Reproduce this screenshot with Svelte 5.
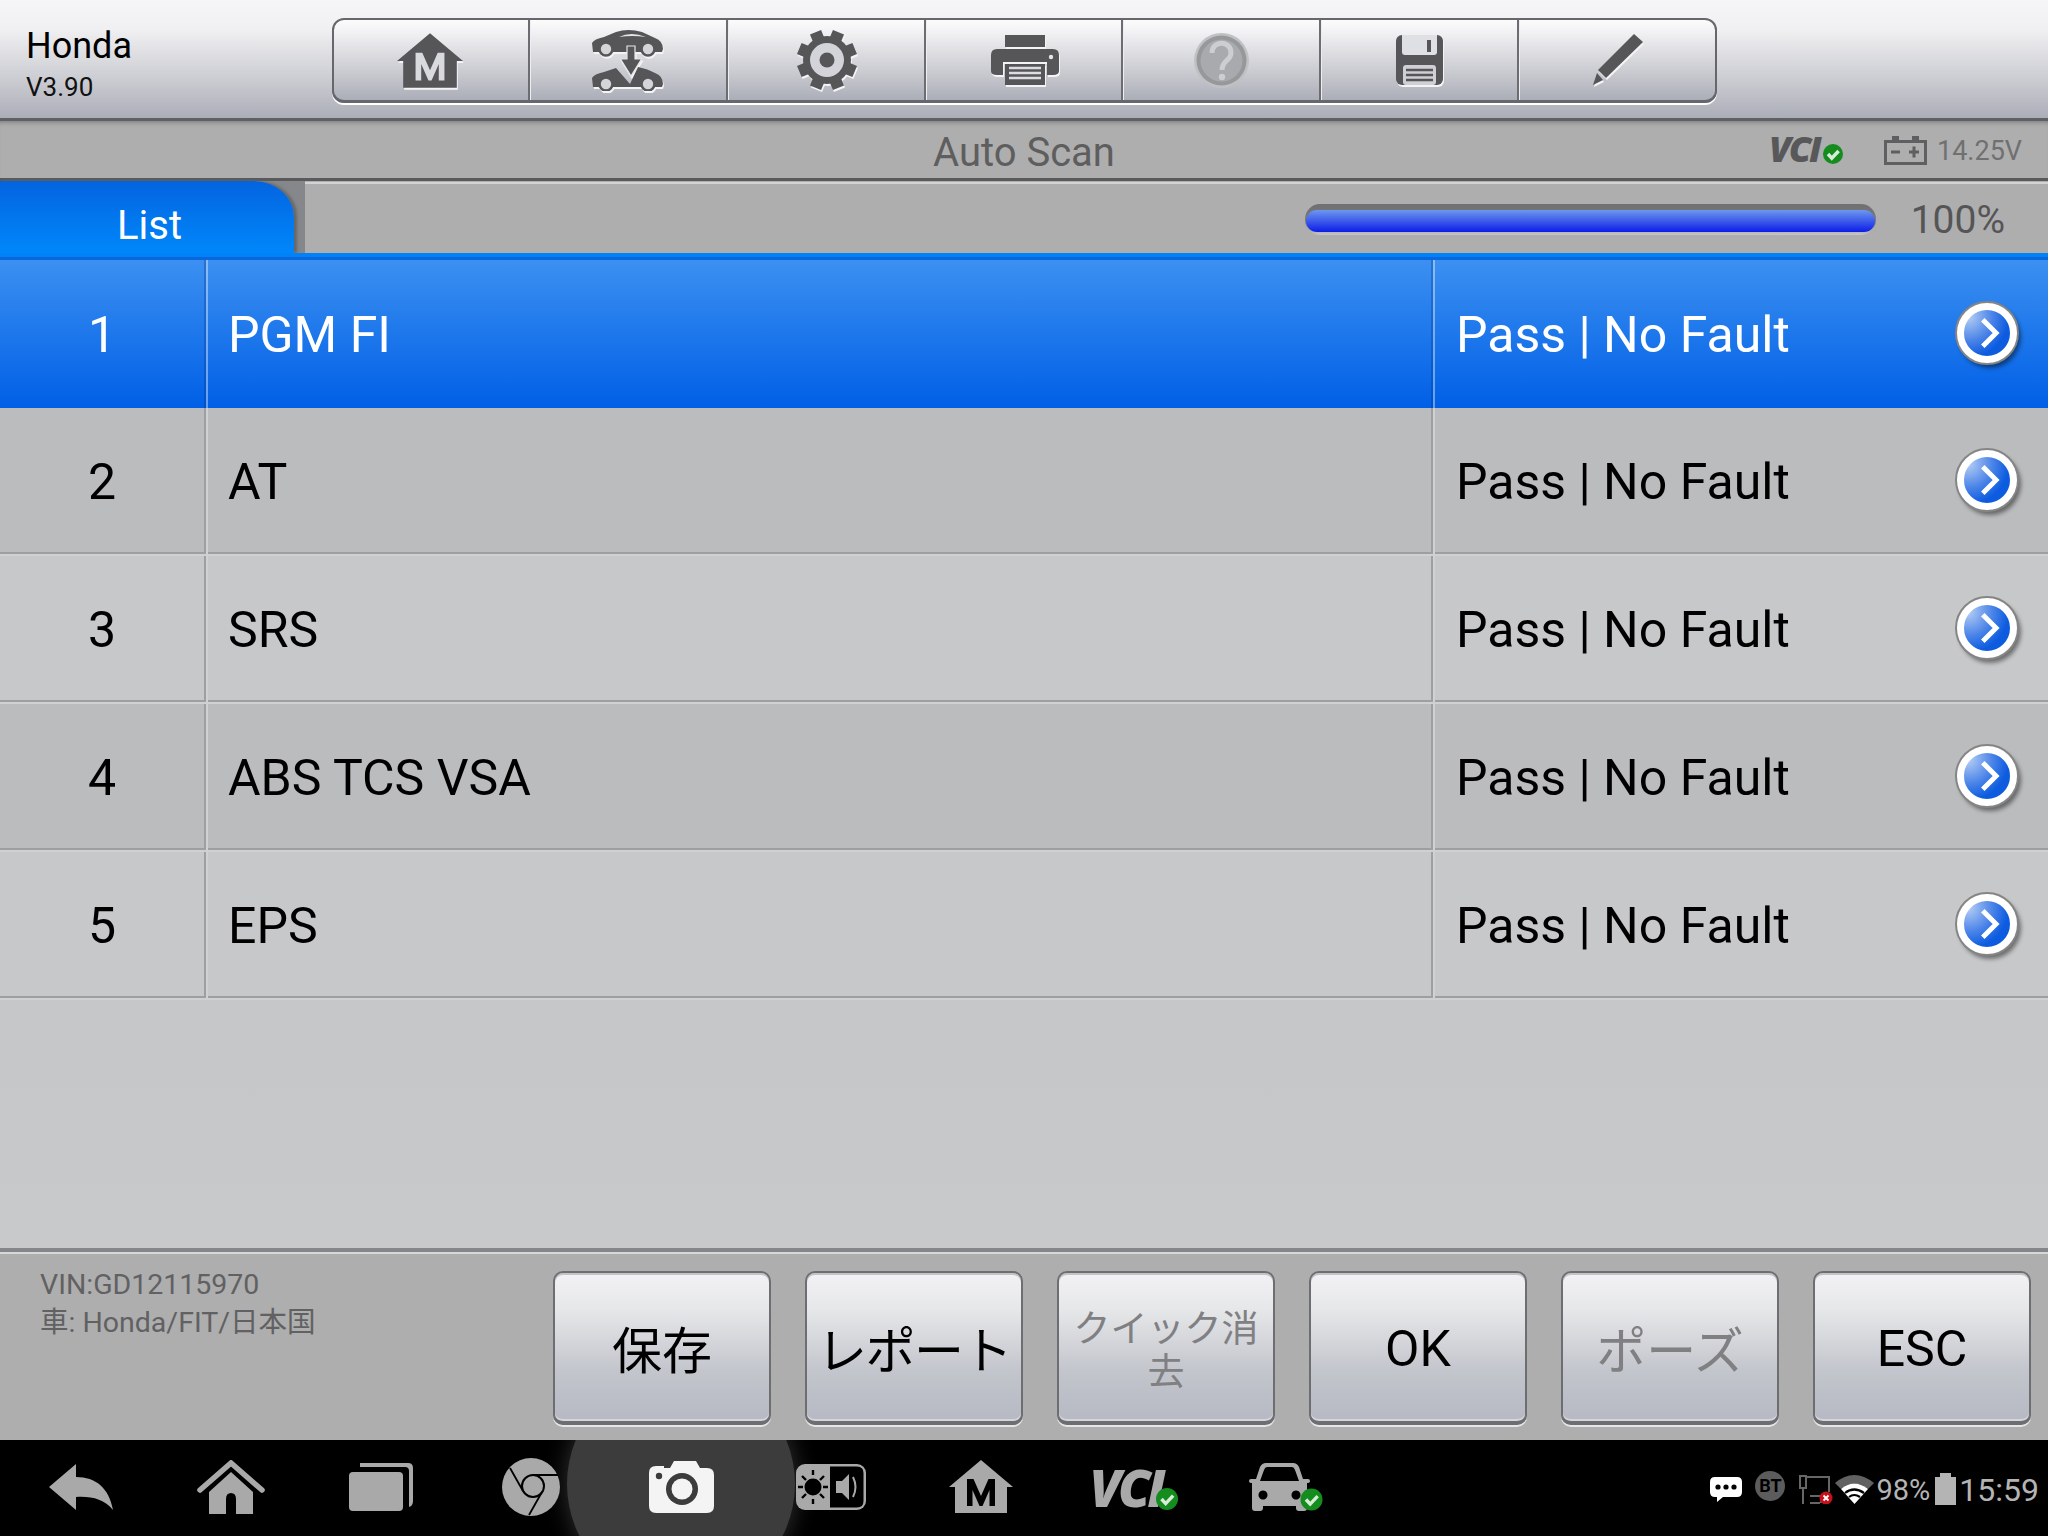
<script lang="ts">
	// Honda auto scan result page: top toolbar, result list, footer buttons, android nav bar
	const rows = [
		{ n: 1, name: 'PGM FI' },
		{ n: 2, name: 'AT' },
		{ n: 3, name: 'SRS' },
		{ n: 4, name: 'ABS TCS VSA' },
		{ n: 5, name: 'EPS' }
	];
	const buttons = [
		{ label: '保存' },
		{ label: 'レポート', tight: true },
		{ label: 'クイック消去', off: true, small: true },
		{ label: 'OK', latin: true },
		{ label: 'ポーズ', off: true },
		{ label: 'ESC', latin: true }
	];
	const tools = ['home', 'swap', 'gear', 'print', 'help', 'save', 'pen'];
	const navs = ['back', 'home', 'recent', 'chrome', 'camera', 'mix', 'm', 'vci', 'car'];
</script>

{#snippet check(cx: number, cy: number, rx: number, ry: number)}
	<ellipse {cx} {cy} {rx} {ry} fill="#148c1e" />
	<path d={`M${cx - rx * 0.5} ${cy} l${rx * 0.38} ${ry * 0.42} l${rx * 0.68} ${-ry * 0.72}`} fill="none" stroke="#d8ecd8" stroke-width="3.4" />
{/snippet}

{#snippet mhouse(fill: string, letter: string)}
	<path d="M32 0 L64 27 H58 V53 H6 V27 H0 Z" {fill} />
	<path d="M18 46 V19 H24.500 L32 36 L39.500 19 H46 V46 H40.500 V30 L33.500 46 H30.500 L23.500 30 V46 Z" fill={letter} />
{/snippet}

{#snippet minicar(y: number, notch: boolean)}
	<g transform={`translate(0 ${y})`}>
		{#if notch}
			<path d="M0 14 Q2 10 12 8 Q18 6 24 4 L38 20 L46 3 Q56 5 63 9 Q71 12 71 20 L70 23 H1 Z" fill="#565658" />
		{:else}
			<path d="M0 14 Q2 10 12 8 L24 3 Q36 -1 50 3 L63 9 Q71 12 71 20 L70 23 H1 Z" fill="#565658" />
			<path d="M27 8 Q39 2 54 8 Q40 6 27 8 Z" fill="#e4e5e8" />
		{/if}
		<circle cx="14" cy="20" r="6.500" fill="#d4d5d9" stroke="#565658" stroke-width="2.600" />
		<circle cx="56" cy="20" r="6.500" fill="#d4d5d9" stroke="#565658" stroke-width="2.600" />
	</g>
{/snippet}

<div class="page">
	<header class="top">
		<div class="brand">
			<div class="make">Honda</div>
			<div class="ver">V3.90</div>
		</div>
		<div class="toolbar">
			{#each tools as t}
				<div class="tool">
					{#if t === 'home'}
						<svg class="ico house" width="66" height="55" viewBox="0 0 64 53">{@render mhouse('#565658', '#d9dadd')}</svg>
					{:else if t === 'swap'}
						<svg class="ico" width="71" height="62" viewBox="0 0 71 62">
							{@render minicar(0, false)}
							{@render minicar(35, true)}
							<path d="M35 17 H43 V30 H49.500 L39 47 L28.500 30 H35 Z" fill="#565658" stroke="#e4e5e8" stroke-width="1.200" />
						</svg>
					{:else if t === 'gear'}
						<svg class="ico nudge" width="60" height="60" viewBox="0 0 60 60">
							<g fill="#565658">
								{#each [0, 45, 90, 135, 180, 225, 270, 315] as a}
									<rect x="24" y="0" width="12" height="14" transform={`rotate(${a + 22.5} 30 30)`} />
								{/each}
								<circle cx="30" cy="30" r="24" />
							</g>
							<circle cx="30" cy="30" r="17" fill="#d3d4d9" />
							<circle cx="30" cy="30" r="7.500" fill="#565658" />
						</svg>
					{:else if t === 'print'}
						<svg class="ico nudge" width="68" height="50" viewBox="0 0 68 50">
							<path d="M14 0 H54 V12 H14 Z" fill="#565658" />
							<path d="M6 14 H62 Q68 14 68 20 V36 Q68 40 62 40 H56 V27 H12 V40 H6 Q0 40 0 36 V20 Q0 14 6 14 Z" fill="#565658" />
							<circle cx="60" cy="22" r="2.200" fill="#e4e5e8" />
							<path d="M14 29 H54 V50 H14 Z" fill="#565658" />
							<path d="M18 33 H50 M18 38 H50 M18 43 H50" stroke="#dcdde0" stroke-width="2.400" />
						</svg>
					{:else if t === 'help'}
						<svg class="ico off" width="55" height="55" viewBox="0 0 55 55">
							<circle cx="27.500" cy="27.500" r="27.500" fill="#c0c1c4" />
							<circle cx="27.500" cy="27.500" r="25" fill="#979899" />
							<circle cx="27.500" cy="27.500" r="21" fill="#a9aaad" />
							<path d="M18 20 C18 7 37 7 37 20 C37 28 28 27 28 37" fill="none" stroke="#cdced1" stroke-width="5" />
							<circle cx="28" cy="44" r="3.200" fill="#cdced1" />
						</svg>
					{:else if t === 'save'}
						<svg class="ico" width="47" height="50" viewBox="0 0 47 50">
							<rect width="47" height="50" rx="6" fill="#565658" />
							<path d="M6 0 H41 V17 Q41 20 38 20 H9 Q6 20 6 17 Z" fill="#dfe0e3" />
							<rect x="31" y="5" width="4" height="12" fill="#565658" />
							<rect x="7" y="30" width="33" height="20" rx="3" fill="#cfd0d5" />
							<path d="M10 35 H37 M10 40 H37 M10 45 H37" stroke="#565658" stroke-width="2.400" />
						</svg>
					{:else if t === 'pen'}
						<svg class="ico nudge" width="50" height="52" viewBox="0 0 50 52">
							<path d="M41 0 L50 8 L13 44 L5 36 Z" fill="#565658" />
							<path d="M4 39 L10 46 L0 51 Z" fill="#565658" />
						</svg>
					{/if}
				</div>
			{/each}
		</div>
	</header>

	<div class="titlebar">
		<div class="title">Auto Scan</div>
		<div class="vci">
			<span class="vci-text">VCI</span>
			<svg class="vci-ok" width="20" height="20" viewBox="0 0 20 20">{@render check(10, 10, 10, 10)}</svg>
		</div>
		<svg class="batt" width="43" height="29" viewBox="0 0 43 29">
			<path d="M8 0 H15 V4 H28 V0 H35 V4 H43 V29 H0 V4 H8 Z" fill="#5f5f61" />
			<rect x="3" y="7" width="37" height="19" fill="#aeaeae" />
			<path d="M7 16 H16 M25 16 H35 M30 10.500 V21.500" stroke="#5f5f61" stroke-width="3" />
		</svg>
		<div class="volts">14.25V</div>
	</div>

	<div class="tabbar">
		<div class="tab-wrap"><div class="tab">List</div></div>
		<div class="progress-area">
			<div class="progress"><div class="fill"></div></div>
			<div class="pct">100%</div>
		</div>
	</div>
	<div class="strip"></div>

	<main class="list">
		{#each rows as r, i}
			<div class="row" class:sel={i === 0} class:alt={i % 2 === 1}>
				<div class="c-n">{r.n}</div>
				<div class="c-name">{r.name}</div>
				<div class="c-res">
					<span>Pass | No Fault</span>
					<span class="go">
						<svg width="36" height="36" viewBox="0 0 36 36"><path d="M11 3 L26 18 L11 33" fill="none" stroke="#fff" stroke-width="5.500" /></svg>
					</span>
				</div>
			</div>
		{/each}
	</main>

	<footer class="foot">
		<div class="info">
			<div>VIN:GD12115970</div>
			<div>車: Honda/FIT/日本国</div>
		</div>
		<div class="btns">
			{#each buttons as b}
				<div class="btn" class:off={b.off} class:small={b.small} class:latin={b.latin} class:tight={b.tight}><span>{b.label}</span></div>
			{/each}
		</div>
	</footer>

	<nav class="nav">
		<div class="cam-glow"></div>
		<div class="nav-icons">
			{#each navs as n}
				<div class="nav-cell">
					{#if n === 'back'}
						<svg width="64" height="46" viewBox="0 0 64 46">
							<path d="M0 23 L27 0 V13 C47 13 60 24 64 46 C55 35 42 32 27 33 V46 Z" fill="#a9a9a9" />
						</svg>
					{:else if n === 'home'}
						<svg width="68" height="54" viewBox="0 0 68 54">
							<path d="M3 30 L34 3 L65 30" fill="none" stroke="#a9a9a9" stroke-width="5.500" stroke-linecap="round" />
							<path d="M12 32 L34 12 L56 32 V54 H39 V39 Q39 33 34 33 Q29 33 29 39 V54 H12 Z" fill="#a9a9a9" />
						</svg>
					{:else if n === 'recent'}
						<svg width="64" height="48" viewBox="0 0 64 48">
							<path d="M11 0 H59 Q64 0 64 5 V38 Q64 43 60 44 V8 Q60 4 56 4 H11 Z" fill="#a9a9a9" />
							<rect y="9" width="54" height="39" rx="4" fill="#a9a9a9" />
						</svg>
					{:else if n === 'chrome'}
						<svg width="58" height="58" viewBox="0 0 58 58">
							<circle cx="29" cy="29" r="29" fill="#a9a9a9" />
							<circle cx="31" cy="28" r="11" fill="none" stroke="#000" stroke-width="2" />
							<path d="M31 17 H56 M21 33 L8 10 M40 34 L27 57" stroke="#000" stroke-width="1.800" fill="none" />
						</svg>
					{:else if n === 'camera'}
						<svg width="65" height="52" viewBox="0 0 65 52">
							<path d="M7 5 H15 V7 H21 L25 0 H47 L51 7 H58 Q65 7 65 14 V45 Q65 52 58 52 H7 Q0 52 0 45 V12 Q0 5 7 5 Z" fill="#f4f4f4" />
							<circle cx="33" cy="28" r="16" fill="#3c3c3c" />
							<circle cx="33" cy="28" r="10.500" fill="#f4f4f4" />
							<circle cx="10" cy="15" r="3.200" fill="#3c3c3c" />
						</svg>
					{:else if n === 'mix'}
						<svg width="70" height="46" viewBox="0 0 70 46">
							<rect width="70" height="46" rx="9" fill="#a9a9a9" />
							<path d="M34 2.500 H61 Q67.500 2.500 67.500 9 V37 Q67.500 43.500 61 43.500 H34 Z" fill="#000" />
							<circle cx="17" cy="23" r="8.500" fill="#000" />
							<path d="M17 6 V11 M17 35 V40 M2 23 H7 M27 23 H32 M6 12 L10 16 M28 12 L24 16 M6 34 L10 30 M28 34 L24 30" stroke="#000" stroke-width="2.400" />
							<path d="M40 17 H46 L53 10 V36 L46 29 H40 Z" fill="#a9a9a9" />
							<path d="M57 13 Q62 23 57 33" fill="none" stroke="#a9a9a9" stroke-width="2" />
						</svg>
					{:else if n === 'm'}
						<svg width="64" height="53" viewBox="0 0 64 53">{@render mhouse('#a9a9a9', '#000')}</svg>
					{:else if n === 'vci'}
						<div class="nav-vci">
							<span class="nav-vci-text">VCI</span>
							<svg width="22" height="22" viewBox="0 0 22 22">{@render check(11, 11, 11, 11)}</svg>
						</div>
					{:else if n === 'car'}
						<svg class="nav-car" width="74" height="48" viewBox="0 0 74 48">
							<path fill-rule="evenodd" d="M17 0 H44 Q48 0 50 4 L54 16 H59 Q61 16 61 18 Q61 20 58 20 V45 Q58 48 55 48 H50 Q47 48 47 45 V43 H14 V45 Q14 48 11 48 H6 Q3 48 3 45 V20 Q0 20 0 18 Q0 16 2 16 H7 L11 4 Q13 0 17 0 Z M18 4 Q16 4 15 7 L11 18 H50 L46 7 Q45 4 43 4 Z M14 27.500 a4.500 4.500 0 1 0 .01 0 Z M47 27.500 a4.500 4.500 0 1 0 .01 0 Z" fill="#a9a9a9" />
							{@render check(62.500, 36.500, 11, 11)}
						</svg>
					{/if}
				</div>
			{/each}
		</div>
		<div class="status">
			<svg width="32" height="25" viewBox="0 0 32 25">
				<path d="M5 0 H27 Q32 0 32 5 V15 Q32 20 27 20 H13 L7 25 V20 H5 Q0 20 0 15 V5 Q0 0 5 0 Z" fill="#fff" />
				<circle cx="8" cy="10" r="2.600" /><circle cx="16" cy="10" r="2.600" /><circle cx="24" cy="10" r="2.600" />
			</svg>
			<div class="bt">BT</div>
			<svg width="34" height="30" viewBox="0 0 34 30" fill="none" stroke="#666" stroke-width="2">
				<rect x="1" y="2" width="6" height="12" />
				<path d="M4 14 V30 M7 3 H30 V18 M11 22 H24 M11 29 H21 M22 22 V29" />
				<circle cx="27" cy="24" r="6.500" fill="#c8101a" stroke="none" />
				<path d="M24.500 21.500 L29.500 26.500 M29.500 21.500 L24.500 26.500" stroke="#fff" stroke-width="1.800" />
			</svg>
			<svg class="wifi" width="39" height="29" viewBox="0 0 39 29">
				<path d="M0 8 Q19 -8 39 8 L33 14 Q19 3 6 14 Z" fill="#616161" />
				<path d="M6 14 Q19 3 33 14 L19.500 29 Z" fill="#fff" />
				<path d="M10 18 Q19 11 29 18 M14 22 Q19 18 25 22" stroke="#000" stroke-width="2.200" fill="none" />
			</svg>
			<span class="st-text pct98">98%</span>
			<div class="phone-batt"></div>
			<span class="st-text clock">15:59</span>
		</div>
	</nav>
</div>

<style>
	:global(body) {
		margin: 0;
		background: #000;
	}

	.page {
		width: 2048px;
		height: 1536px;
		display: flex;
		flex-direction: column;
		overflow: hidden;
		font-family: Roboto, 'Noto Sans CJK JP', sans-serif;
		background: #c6c7c9;
	}

	.top {
		height: 118px;
		flex: none;
		display: flex;
		align-items: flex-start;
		background: linear-gradient(#f6f6f8 0%, #f0f0f2 25%, #c9cad0 70%, #abadb8 100%);
		border-bottom: 3px solid #5f6064;
		box-sizing: content-box;
	}

	.brand {
		width: 332px;
		flex: none;
		padding: 25px 0 0 26px;
		box-sizing: border-box;
	}

	.make {
		font-size: 36px;
		line-height: 42px;
		color: #000;
	}

	.ver {
		font-size: 26px;
		line-height: 34px;
		margin-top: 3px;
		color: #111;
	}

	.toolbar {
		margin-top: 18px;
		width: 1385px;
		height: 85px;
		box-sizing: border-box;
		display: flex;
		border: 2px solid #66676c;
		border-bottom-width: 3px;
		border-radius: 12px;
		box-shadow: 0 2px 0 #fff;
		background: linear-gradient(#fbfbfc 0%, #f4f4f6 12%, #c6c7cd 70%, #abadb8 100%);
		overflow: hidden;
	}

	.tool {
		width: 197.800px;
		flex: none;
		display: flex;
		align-items: center;
		justify-content: center;
		border-right: 2px solid #6c6d72;
		box-shadow: 1px 0 0 #eee;
		box-sizing: border-box;
	}

	.tool:first-child {
		width: 196px;
	}

	.tool:last-child {
		border-right: none;
		box-shadow: none;
		flex: 1;
	}

	.ico {
		filter: drop-shadow(1px 2px 0 #f4f4f6);
	}

	.ico.off {
		filter: none;
	}

	.ico.nudge {
		margin-left: 3px;
	}

	.ico.house {
		margin-left: -2px;
	}

	.titlebar {
		height: 57px;
		flex: none;
		position: relative;
		display: flex;
		align-items: center;
		background: #aeaeae;
		box-shadow: inset 0 5px 5px -4px #77777a;
		padding-right: 26px;
		box-sizing: border-box;
		justify-content: flex-end;
	}

	.title {
		position: absolute;
		left: 0;
		right: 0;
		top: 8px;
		text-align: center;
		font-size: 40px;
		line-height: 47px;
		color: #5e5e5e;
	}

	.vci {
		position: relative;
		width: 74px;
		height: 30px;
		margin-right: 41px;
		margin-top: -1px;
	}

	.vci-text {
		font-family: 'Open Sans', Roboto, sans-serif;
		font-style: italic;
		font-weight: 800;
		font-size: 36px;
		line-height: 30px;
		letter-spacing: -2.500px;
		color: #58585a;
	}

	.vci-ok {
		position: absolute;
		right: 0;
		bottom: 0;
	}

	.batt {
		flex: none;
		margin-top: 1px;
	}

	.volts {
		font-size: 27px;
		color: #707072;
		margin-left: 10px;
		margin-top: 3px;
	}

	.tabbar {
		height: 75px;
		flex: none;
		display: flex;
		background: #aeaeae;
		border-top: 3px solid #5a5a5c;
		box-sizing: border-box;
	}

	.tab-wrap {
		width: 305px;
		flex: none;
		background: #86878a;
	}

	.tab {
		width: 294px;
		height: 72px;
		box-sizing: border-box;
		padding-left: 5px;
		border-top-right-radius: 40px 36px;
		background: linear-gradient(#0464e0, #0087fa);
		color: #fff;
		font-size: 40px;
		text-align: center;
		line-height: 90px;
		box-shadow: 3px 0 3px #666;
		overflow: hidden;
	}

	.progress-area {
		flex: 1;
		display: flex;
		align-items: center;
		justify-content: flex-end;
		border-top: 2px solid #d3d3d4;
		padding: 0 43px 0 0;
		margin-top: 1px;
		background: #aeaeae;
	}

	.progress {
		width: 571px;
		height: 31px;
		box-sizing: border-box;
		margin-right: 35px;
		border-radius: 15px;
		background: linear-gradient(#707072, #7a7a7c 60%, #c8c8c8);
		padding: 6px 1px 3px;
		margin-top: 2px;
	}

	.fill {
		height: 100%;
		border-radius: 11px;
		background: linear-gradient(#6d98ee, #0c1de8);
	}

	.pct {
		font-size: 39px;
		line-height: 46px;
		margin-top: 3px;
		color: #555557;
	}

	.strip {
		height: 7px;
		flex: none;
		background: linear-gradient(#0083f8 0 4px, #0a66da 4px);
	}

	.list {
		flex: 1;
		min-height: 0;
		background: linear-gradient(#bdbec0, #c8c9cb);
	}

	.row {
		height: 148px;
		display: flex;
		box-sizing: border-box;
		border-bottom: 2px solid #d0d1d3;
		box-shadow: inset 0 -2px 0 #9e9fa1;
		background: #c7c8ca;
		font-size: 50px;
		color: #000;
	}

	.row.alt {
		background: #bbbcbe;
	}

	.row.sel {
		border-bottom: none;
		box-shadow: none;
		color: #fff;
		background: linear-gradient(#3c90f1, #005fe6);
	}

	.c-n,
	.c-name,
	.c-res {
		display: flex;
		align-items: center;
		box-sizing: border-box;
		padding-top: 2px;
	}

	.c-n {
		width: 206px;
		flex: none;
		justify-content: center;
		border-right: 2px solid #9e9fa1;
		box-shadow: 2px 0 0 #d0d1d3;
	}

	.c-name {
		width: 1227px;
		flex: none;
		padding-left: 22px;
		border-right: 2px solid #9e9fa1;
		box-shadow: 2px 0 0 #d0d1d3;
	}

	.sel .c-n,
	.sel .c-name {
		border-right-color: rgba(0, 50, 130, 0.3);
		box-shadow: 2px 0 0 rgba(255, 255, 255, 0.4);
	}

	.c-res {
		flex: 1;
		padding: 2px 30px 0 23px;
		justify-content: space-between;
	}

	.go {
		width: 62px;
		height: 62px;
		box-sizing: border-box;
		border-radius: 50%;
		border: 8px solid #fff;
		outline: 2px solid #858585;
		outline-offset: -1px;
		background: radial-gradient(circle at 10% 15%, #b4cdf5, #4b84e8 42%, #0d5ce0 70%);
		box-shadow: 3px 4px 4px rgba(0, 0, 0, 0.45);
		display: flex;
		align-items: center;
		justify-content: center;
		margin-top: -5px;
	}

	.go svg {
		width: 32px;
		height: 32px;
		margin-left: 3px;
	}

	.foot {
		height: 192px;
		flex: none;
		box-sizing: border-box;
		display: flex;
		justify-content: space-between;
		background: #aeaeae;
		border-top: 4px solid #85868a;
		box-shadow: inset 0 2px 0 #d7d8da;
		padding: 19px 17px 0 40px;
	}

	.info {
		font-size: 28.500px;
		line-height: 38px;
		color: #616163;
		margin-top: -5px;
	}

	.btns {
		display: flex;
		gap: 34px;
	}

	.btn {
		width: 218px;
		height: 154px;
		box-sizing: border-box;
		display: flex;
		align-items: center;
		justify-content: center;
		text-align: center;
		padding: 0 6px;
		border: 2px solid #6d6e72;
		border-bottom-width: 4px;
		border-radius: 10px;
		background: linear-gradient(#f2f2f4, #e6e7e9 25%, #c4c6cd 65%, #b6b8c3);
		box-shadow: inset 0 -2px 0 #d5d6dc, inset 0 2px 0 #c2c3c6, 0 2px 0 #e6e6e8;
		font-size: 50px;
		color: #000;
	}

	.btn.off {
		color: #808082;
	}

	.btn.small {
		font-size: 37px;
		line-height: 43px;
		padding-top: 8px;
	}

	.btn.latin {
		padding-top: 4px;
	}

	.btn.tight {
		letter-spacing: -1.500px;
	}

	.nav {
		height: 96px;
		flex: none;
		position: relative;
		overflow: hidden;
		background: #000;
		display: flex;
		justify-content: space-between;
	}

	.cam-glow {
		position: absolute;
		left: 567px;
		top: -70px;
		width: 228px;
		height: 228px;
		border-radius: 50%;
		background: #3c3c3c;
		box-shadow: 0 0 24px #333;
	}

	.nav-icons {
		position: relative;
		display: flex;
		padding-left: 6px;
	}

	.nav-cell {
		width: 150px;
		height: 96px;
		display: flex;
		align-items: center;
		justify-content: center;
		padding-bottom: 3px;
		box-sizing: border-box;
	}

	.nav-car {
		margin-left: 10px;
	}

	.nav-vci {
		position: relative;
		width: 88px;
		height: 42px;
		margin: 5px 0 0 5px;
	}

	.nav-vci-text {
		font-family: 'Open Sans', Roboto, sans-serif;
		font-style: italic;
		font-weight: 800;
		font-size: 52px;
		line-height: 38px;
		letter-spacing: -3.500px;
		color: #a9a9a9;
	}

	.nav-vci svg {
		position: absolute;
		right: 0;
		bottom: 0;
	}

	.status {
		display: flex;
		align-items: center;
		padding-right: 9px;
		margin-top: 2px;
		position: relative;
	}

	.status svg {
		flex: none;
		fill: currentColor;
	}

	.bt {
		width: 30px;
		height: 30px;
		margin: -6px 14px 0 13px;
		border-radius: 50%;
		background: #5c5c5c;
		color: #000;
		font-size: 18px;
		font-weight: 700;
		text-align: center;
		line-height: 30px;
	}

	.wifi {
		margin-left: 2px;
	}

	.st-text {
		font-size: 29px;
		color: #b4b4b4;
		margin-top: 1px;
	}

	.clock {
		font-size: 32px;
	}

	.pct98 {
		margin-left: 2px;
	}

	.phone-batt {
		width: 21px;
		height: 28px;
		margin: 3px 3px 0 5px;
		background: #b4b4b4;
		position: relative;
	}

	.phone-batt::before {
		content: '';
		position: absolute;
		left: 5px;
		top: -4px;
		width: 11px;
		height: 4px;
		background: #b4b4b4;
	}
</style>
